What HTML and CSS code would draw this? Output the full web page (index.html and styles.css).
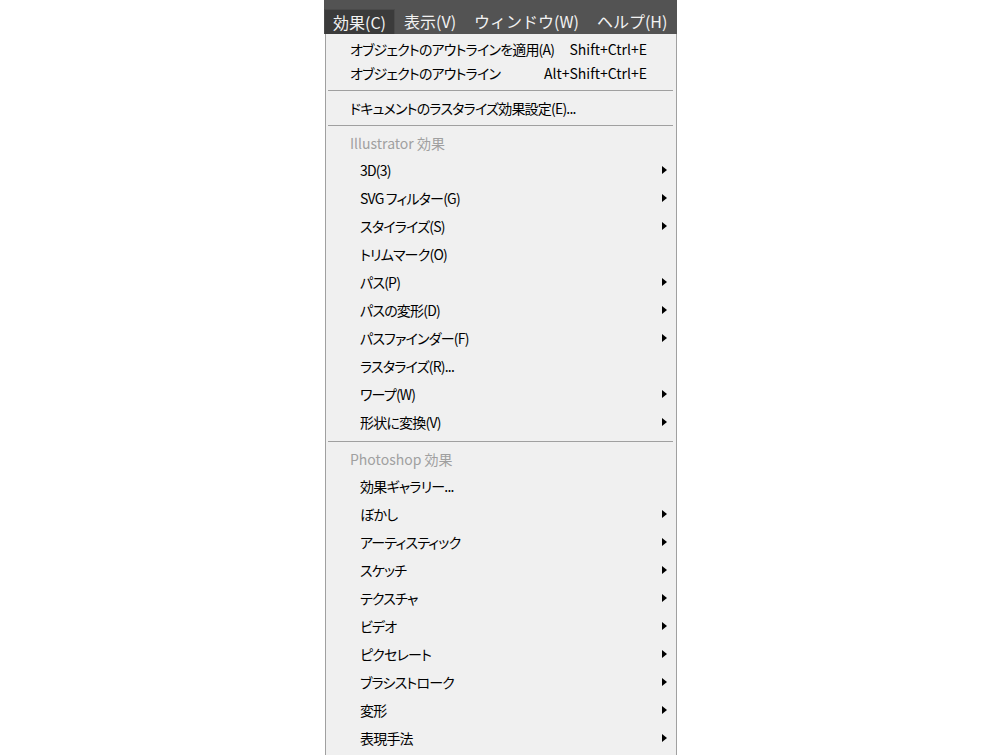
FILE: index.html
```html
<!DOCTYPE html>
<html lang="ja">
<head>
    <meta charset="UTF-8">
    <title>効果メニュー</title>
    <link rel="stylesheet" href="styles.css">
</head>
<body>
    <div class="menu-wrap">
        <div class="menubar">
            <span class="menubar-item active">効果(C)</span>
            <span class="menubar-item">表示(V)</span>
            <span class="menubar-item">ウィンドウ(W)</span>
            <span class="menubar-item">ヘルプ(H)</span>
        </div>
        <div class="menu-panel">
            <div class="item top"><span>オブジェクトのアウトラインを適用(A)</span><span class="shortcut">Shift+Ctrl+E</span></div>
            <div class="item top"><span>オブジェクトのアウトライン</span><span class="shortcut">Alt+Shift+Ctrl+E</span></div>
            <div class="separator"></div>
            <div class="item top"><span>ドキュメントのラスタライズ効果設定(E)...</span></div>
            <div class="separator"></div>
            <div class="header">Illustrator 効果</div>
            <div class="item sub"><span>3D(3)</span><i class="arrow"></i></div>
            <div class="item sub"><span>SVG フィルター(G)</span><i class="arrow"></i></div>
            <div class="item sub"><span>スタイライズ(S)</span><i class="arrow"></i></div>
            <div class="item sub"><span>トリムマーク(O)</span></div>
            <div class="item sub"><span>パス(P)</span><i class="arrow"></i></div>
            <div class="item sub"><span>パスの変形(D)</span><i class="arrow"></i></div>
            <div class="item sub"><span>パスファインダー(F)</span><i class="arrow"></i></div>
            <div class="item sub"><span>ラスタライズ(R)...</span></div>
            <div class="item sub"><span>ワープ(W)</span><i class="arrow"></i></div>
            <div class="item sub"><span>形状に変換(V)</span><i class="arrow"></i></div>
            <div class="separator"></div>
            <div class="header">Photoshop 効果</div>
            <div class="item sub"><span>効果ギャラリー...</span></div>
            <div class="item sub"><span>ぼかし</span><i class="arrow"></i></div>
            <div class="item sub"><span>アーティスティック</span><i class="arrow"></i></div>
            <div class="item sub"><span>スケッチ</span><i class="arrow"></i></div>
            <div class="item sub"><span>テクスチャ</span><i class="arrow"></i></div>
            <div class="item sub"><span>ビデオ</span><i class="arrow"></i></div>
            <div class="item sub"><span>ピクセレート</span><i class="arrow"></i></div>
            <div class="item sub"><span>ブラシストローク</span><i class="arrow"></i></div>
            <div class="item sub"><span>変形</span><i class="arrow"></i></div>
            <div class="item sub"><span>表現手法</span><i class="arrow"></i></div>
        </div>
    </div>
</body>
</html>
```

FILE: styles.css
```css
body {
    margin: 0;
    background-color: #fff;
    font-family: "Noto Sans CJK JP", "Noto Sans", sans-serif;
    overflow: hidden;
}
.menu-wrap {
    margin-left: 325px;
    width: 352px;
}
.menubar {
    display: flex;
    align-items: flex-end;
    height: 34px;
    background-color: #535353;
    margin-left: -1px;
}
.menubar-item {
    height: 25px;
    line-height: 24px;
    padding: 0 9px;
    font-size: 16px;
    color: #f2f2f2;
    box-sizing: border-box;
}
.menubar-item.active {
    background-color: #3b3b3b;
    border: 1px solid #4a4a4a;
    border-bottom: none;
    padding: 0 8px;
}
.menu-panel {
    background-color: #f0f0f0;
    border-left: 1px solid #a0a0a0;
    border-right: 1px solid #a0a0a0;
    padding: 3px 0 20px;
    font-size: 14px;
    font-feature-settings: "palt";
    color: #000;
}
.item {
    display: flex;
    align-items: center;
    justify-content: space-between;
    letter-spacing: -0.8px;
}
.item.top {
    height: 24px;
    padding: 0 29px 0 24px;
}
.item.sub {
    height: 28px;
    padding: 0 9px 0 34px;
}
.shortcut {
    font-feature-settings: normal;
    letter-spacing: 0;
}
.arrow {
    width: 0;
    height: 0;
    border-top: 4.5px solid transparent;
    border-bottom: 4.5px solid transparent;
    border-left: 5px solid #000;
}
.header {
    height: 25px;
    line-height: 25px;
    padding-left: 24px;
    color: #a0a0a0;
}
.separator {
    height: 1px;
    background-color: #a0a0a0;
    margin: 5px 3px 5px 2px;
}
```
